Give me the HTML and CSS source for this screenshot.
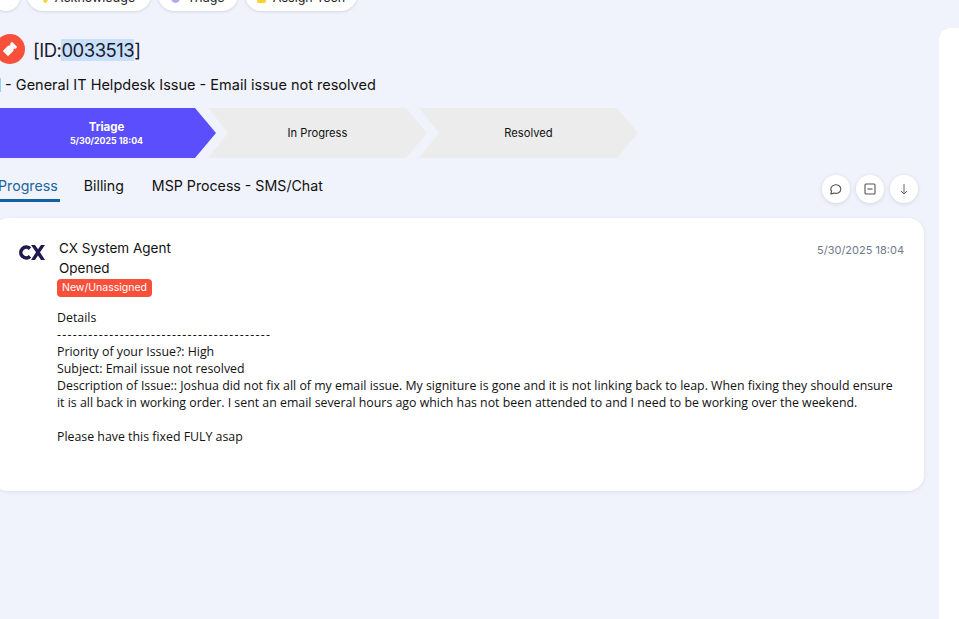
FILE: index.html
```html
<!DOCTYPE html>
<html lang="en">
<head>
<meta charset="UTF-8">
<meta name="viewport" content="width=device-width, initial-scale=1.0">
<title>Ticket 0033513</title>
<link rel="stylesheet" href="styles.css">
</head>
<body>
<div class="page">
    <main class="ticket">
        <div class="actions">
            <div class="chip chip-first"></div>
            <div class="chip chip-ack"><span class="dot dot-yellow"></span>Acknowledge</div>
            <div class="chip chip-triage"><span class="dot dot-purple"></span>Triage</div>
            <div class="chip chip-assign"><span class="dot dot-gold"></span>Assign Tech</div>
        </div>

        <div class="title-row">
            <span class="ticket-icon">
                <svg width="18" height="18" viewBox="0 0 18 18"><path d="M11 1.800l5.200 5.200-1.700 1.700a1.500 1.500 0 0 0-2 2L7 16.200 1.800 11l5.500-5.500a1.500 1.500 0 0 0 2-2z" fill="#fff"/></svg>
            </span>
            <h1 class="title">[ID:<span class="selected">0033513</span>]</h1>
        </div>
        <div class="subtitle"><span class="subtitle-mark"></span> - General IT Helpdesk Issue - Email issue not resolved</div>

        <div class="stages">
            <div class="stage stage-active"><b>Triage</b><small>5/30/2025 18:04</small></div>
            <div class="stage">In Progress</div>
            <div class="stage">Resolved</div>
        </div>

        <div class="tabs-row">
            <div class="tabs">
                <div class="tab tab-active">Progress</div>
                <div class="tab">Billing</div>
                <div class="tab">MSP Process - SMS/Chat</div>
            </div>
            <div class="tools">
                <button class="tool"><svg width="14" height="14" viewBox="0 0 14 14"><path d="M1.800 12l.8-2.600A5 4.300 0 1 1 5 11.100z" fill="none" stroke="#555" stroke-width="1.100" stroke-linejoin="round"/></svg></button>
                <button class="tool"><svg width="14" height="14" viewBox="0 0 14 14"><rect x="2" y="2" width="10" height="10" rx="1" fill="none" stroke="#555" stroke-width="1.100"/><path d="M4.500 7h5" stroke="#555" stroke-width="1.100"/></svg></button>
                <button class="tool"><svg width="14" height="14" viewBox="0 0 14 14"><path d="M7 2v10M4 9l3 3 3-3" fill="none" stroke="#666" stroke-width="1"/></svg></button>
            </div>
        </div>

        <article class="card">
            <svg class="logo" width="26" height="15" viewBox="0 0 26 15"><path d="M11 3.600A5.400 5.400 0 1 0 11 11.400" fill="none" stroke="#1f1a4d" stroke-width="3.600"/><path d="M12 0h4l3 4.200L22 0h4l-5 7.300L26 15h-4l-3-4.500L16 15h-4l5-7.700z" fill="#1f1a4d"/></svg>
            <div class="entry">
                <div class="entry-head">
                    <div>
                        <div class="agent">CX System Agent</div>
                        <div class="agent">Opened</div>
                    </div>
                    <time class="stamp">5/30/2025 18:04</time>
                </div>
                <span class="badge">New/Unassigned</span>
                <div class="body-text">Details
<span class="rule">-----------------------------------------</span>
Priority of your Issue?: High
Subject: Email issue not resolved
Description of Issue:: Joshua did not fix all of my email issue. My signiture is gone and it is not linking back to leap. When fixing they should ensure it is all back in working order. I sent an email several hours ago which has not been attended to and I need to be working over the weekend.

Please have this fixed FULY asap</div>
            </div>
        </article>
    </main>
    <aside class="side"></aside>
</div>
</body>
</html>
```

FILE: styles.css
```css
html, body {
    margin: 0;
    padding: 0;
    height: 100%;
    overflow: hidden;
    background: #f0f3fb;
    font-family: Inter, "Open Sans", sans-serif;
    color: #111;
}
.page {
    display: flex;
    height: 619px;
}
.ticket {
    width: 932px;
    margin-left: -8px;
    flex: none;
}
.side {
    width: 40px;
    margin: 28px 0 0 15px;
    background: #fff;
    border-radius: 12px 0 0 0;
    flex: none;
}

/* action chips, scrolled partly off the top */
.actions {
    display: flex;
    gap: 7px;
    height: 11px;
    align-items: flex-end;
}
.chip {
    height: 32px;
    flex: none;
    box-sizing: border-box;
    padding-top: 5px;
    background: #fff;
    border-radius: 16px;
    box-shadow: 0 1px 3px rgba(0,0,0,0.12);
    display: flex;
    align-items: center;
    justify-content: center;
    gap: 7px;
    font-size: 12.500px;
    color: #222;
}
.chip-first { width: 28px; }
.chip-ack { width: 124px; }
.chip-triage { width: 80px; }
.chip-assign { width: 112px; }
.dot {
    width: 9px;
    height: 10px;
    border-radius: 50%;
}
.dot-yellow { background: #f5d63d; width: 5px; }
.dot-purple { background: #b5a8f2; }
.dot-gold { background: #fad22d; border-radius: 2px; }

.title-row {
    display: flex;
    align-items: center;
    gap: 8px;
    margin: 23px 0 0 3px;
}
.ticket-icon {
    width: 30px;
    height: 30px;
    border-radius: 50%;
    background: #f9503c;
    display: flex;
    align-items: center;
    justify-content: center;
    flex: none;
}
.title {
    margin: 0;
    padding-top: 3px;
    font-size: 18.500px;
    font-weight: 400;
    line-height: 27px;
    letter-spacing: -0.5px;
    color: #1a1a2e;
}
.selected { background: #c9e0fb; }
.subtitle {
    margin-top: 11px;
    font-size: 14.500px;
    line-height: 20px;
}
.subtitle-mark {
    display: inline-block;
    width: 9px;
    height: 14px;
    background: #8fd3f7;
    vertical-align: -2px;
}

.stages {
    display: flex;
    margin: 13px 0 0 5px;
    height: 50px;
}
.stage {
    width: 219px;
    margin-right: -8px;
    flex: none;
    display: flex;
    flex-direction: column;
    align-items: center;
    justify-content: center;
    background: #ececec;
    font-size: 11.200px;
    clip-path: polygon(0 0, calc(100% - 21px) 0, 100% 50%, calc(100% - 21px) 100%, 0 100%, 20px 50%);
}
.stage-active {
    box-sizing: border-box;
    padding-top: 1px;
    background: #5b4ffd;
    color: #fff;
    clip-path: polygon(0 0, calc(100% - 21px) 0, 100% 50%, calc(100% - 21px) 100%, 0 100%);
}
.stage b { font-size: 11.500px; line-height: 13px; }
.stage small { font-size: 8.800px; font-weight: 700; line-height: 13px; }

.tabs-row {
    display: flex;
    justify-content: space-between;
    align-items: flex-start;
    margin-top: 17px;
    padding-right: 6px;
}
.tabs {
    display: flex;
    gap: 24px;
}
.tab {
    font-size: 14.200px;
    line-height: 22px;
    padding: 0 4px 2px 0;
    height: 22px;
}
.tab-active {
    color: #20639b;
    border-bottom: 3px solid #14609e;
    padding-left: 6px;
    padding-right: 2px;
}
.tools {
    display: flex;
    gap: 6px;
}
.tool {
    width: 28px;
    height: 28px;
    padding: 0;
    border: none;
    border-radius: 50%;
    background: #fff;
    box-shadow: 0 1px 4px rgba(0,0,0,0.12);
    display: flex;
    align-items: center;
    justify-content: center;
}

.card {
    display: flex;
    gap: 12px;
    margin-top: 15px;
    height: 273px;
    box-sizing: border-box;
    padding: 20px 20px 0 27px;
    background: #fff;
    border-radius: 16px;
    box-shadow: 0 1px 4px rgba(0,0,0,0.08);
}
.logo {
    flex: none;
    margin-top: 7px;
}
.entry { flex: 1; }
.entry-head {
    display: flex;
    justify-content: space-between;
}
.agent {
    font-size: 13.500px;
    line-height: 20px;
    padding-left: 2px;
}
.stamp {
    font-size: 11px;
    color: #6f7a8a;
    line-height: 24px;
}
.badge {
    display: block;
    width: fit-content;
    margin-top: 1px;
    background: #f9503c;
    color: #fff;
    font-size: 10.500px;
    line-height: 18px;
    padding: 0 5px;
    border-radius: 4px;
}
.body-text {
    margin-top: 12px;
    padding-right: 6px;
    font-family: "Open Sans", sans-serif;
    font-size: 12.350px;
    line-height: 17px;
    white-space: pre-wrap;
    color: #111;
}
.rule { letter-spacing: 1.250px; }
```
